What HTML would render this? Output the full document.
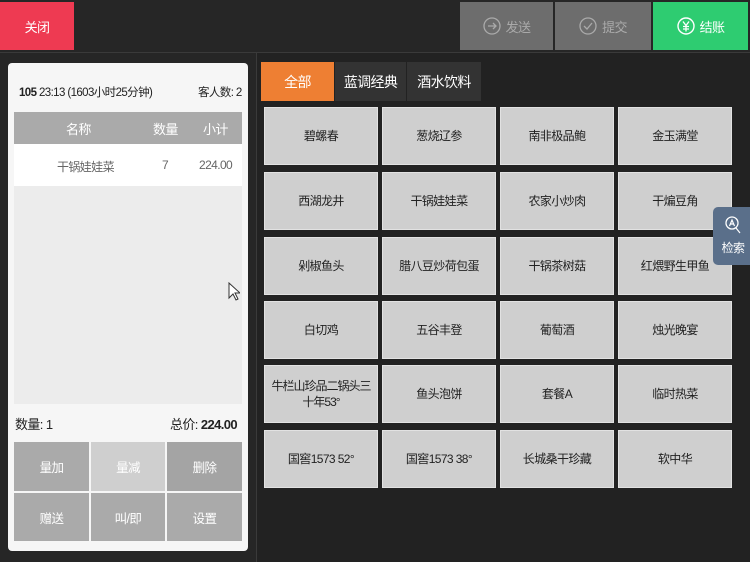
<!DOCTYPE html><html><head><meta charset="utf-8"><style>
*{margin:0;padding:0;box-sizing:border-box}
body{width:750px;height:562px;background:#262626;font-family:"Liberation Sans","Noto Sans CJK SC",sans-serif;position:relative;overflow:hidden;color:#222;letter-spacing:-0.6px}
.a{position:absolute}
.btn{display:flex;align-items:center;justify-content:center;color:#fff;font-size:13px}
.cell{position:absolute;width:114px;height:58px;background:#cfcfcf;border:1px solid #e2e2e2;display:flex;align-items:center;justify-content:center;text-align:center;font-size:12px;color:#222;line-height:16px;padding:0 2px}
.lb{position:absolute;display:flex;align-items:center;justify-content:center;color:#fff;font-size:12.5px}
</style></head><body>
<div class="a" style="left:0;top:52px;width:750px;height:1px;background:#3a3a3a"></div>
<div class="a" style="left:256px;top:53px;width:1px;height:509px;background:#3a3a3a"></div>
<div class="a" style="left:257px;top:53px;width:493px;height:509px;background:#222"></div>
<div class="a btn" style="left:0;top:2px;width:74px;height:48px;background:#ee3a52">关闭</div>
<div class="a btn" style="left:460px;top:2px;width:93px;height:48px;background:#6d6d6d;color:#aaa"><svg width="18" height="18" viewBox="0 0 18 18" style="margin-right:5px"><circle cx="9" cy="9" r="8" fill="none" stroke="#aaa" stroke-width="1.3"/><path d="M5 9h8M10 6l3 3-3 3" fill="none" stroke="#aaa" stroke-width="1.3"/></svg>发送</div>
<div class="a btn" style="left:555px;top:2px;width:96px;height:48px;background:#6d6d6d;color:#aaa"><svg width="18" height="18" viewBox="0 0 18 18" style="margin-right:5px"><circle cx="9" cy="9" r="8" fill="none" stroke="#aaa" stroke-width="1.3"/><path d="M5 9l3 3 5-6" fill="none" stroke="#aaa" stroke-width="1.3"/></svg>提交</div>
<div class="a btn" style="left:653px;top:2px;width:95px;height:48px;background:#2ecc71"><svg width="18" height="18" viewBox="0 0 18 18" style="margin-right:5px"><circle cx="9" cy="9" r="8" fill="none" stroke="#fff" stroke-width="1.4"/><path d="M6 4.5l3 4 3-4M9 8.5v6M6 9.5h6M6 12h6" fill="none" stroke="#fff" stroke-width="1.3"/></svg>结账</div>

<div class="a" style="left:8px;top:63px;width:240px;height:488px;background:#f6f6f6;border-radius:4px"></div>
<div class="a" style="left:19px;top:84px;font-size:11.5px;color:#222"><b>105</b> 23:13 (1603小时25分钟)</div>
<div class="a" style="left:198px;top:84px;font-size:11.5px">客人数: 2</div>
<div class="a" style="left:14px;top:112px;width:228px;height:32px;background:#aaaaaa;color:#fff;font-size:13px">
<span class="a" style="left:52px;top:7px">名称</span><span class="a" style="left:139px;top:7px">数量</span><span class="a" style="left:189px;top:7px">小计</span></div>
<div class="a" style="left:14px;top:144px;width:228px;height:42px;background:#fff;color:#666;font-size:12px">
<span class="a" style="left:43px;top:14px">干锅娃娃菜</span><span class="a" style="left:148px;top:14px">7</span><span class="a" style="left:185px;top:14px">224.00</span></div>
<div class="a" style="left:14px;top:186px;width:228px;height:218px;background:#ececec"></div>
<div class="a" style="left:15px;top:414px;font-size:13px">数量: 1</div>
<div class="a" style="right:513px;top:414px;font-size:13px">总价: <b>224.00</b></div>
<div class="lb" style="left:14px;top:442px;width:75px;height:49px;background:#aaa">量加</div>
<div class="lb" style="left:91px;top:442px;width:74px;height:49px;background:#cfcfcf">量减</div>
<div class="lb" style="left:167px;top:442px;width:75px;height:49px;background:#a4a4a4">删除</div>
<div class="lb" style="left:14px;top:493px;width:75px;height:48px;background:#aaa">赠送</div>
<div class="lb" style="left:91px;top:493px;width:74px;height:48px;background:#aaa">叫/即</div>
<div class="lb" style="left:167px;top:493px;width:75px;height:48px;background:#aaa">设置</div>

<div class="lb" style="left:261px;top:62px;width:73px;height:39px;background:#ee7f33;font-size:14px">全部</div>
<div class="lb" style="left:335px;top:62px;width:71px;height:39px;background:#333;font-size:14px">蓝调经典</div>
<div class="lb" style="left:407px;top:62px;width:74px;height:39px;background:#333;font-size:14px">酒水饮料</div>

<div class="cell" style="left:264px;top:107px">碧螺春</div>
<div class="cell" style="left:382px;top:107px">葱烧辽参</div>
<div class="cell" style="left:500px;top:107px">南非极品鲍</div>
<div class="cell" style="left:618px;top:107px">金玉满堂</div>
<div class="cell" style="left:264px;top:172px">西湖龙井</div>
<div class="cell" style="left:382px;top:172px">干锅娃娃菜</div>
<div class="cell" style="left:500px;top:172px">农家小炒肉</div>
<div class="cell" style="left:618px;top:172px">干煸豆角</div>
<div class="cell" style="left:264px;top:237px">剁椒鱼头</div>
<div class="cell" style="left:382px;top:237px">腊八豆炒荷包蛋</div>
<div class="cell" style="left:500px;top:237px">干锅茶树菇</div>
<div class="cell" style="left:618px;top:237px">红煨野生甲鱼</div>
<div class="cell" style="left:264px;top:301px">白切鸡</div>
<div class="cell" style="left:382px;top:301px">五谷丰登</div>
<div class="cell" style="left:500px;top:301px">葡萄酒</div>
<div class="cell" style="left:618px;top:301px">烛光晚宴</div>
<div class="cell" style="left:264px;top:365px;letter-spacing:-1px">牛栏山珍品二锅头三十年53°</div>
<div class="cell" style="left:382px;top:365px">鱼头泡饼</div>
<div class="cell" style="left:500px;top:365px">套餐A</div>
<div class="cell" style="left:618px;top:365px">临时热菜</div>
<div class="cell" style="left:264px;top:430px">国窖1573 52°</div>
<div class="cell" style="left:382px;top:430px">国窖1573 38°</div>
<div class="cell" style="left:500px;top:430px">长城桑干珍藏</div>
<div class="cell" style="left:618px;top:430px">软中华</div>

<div class="a" style="left:713px;top:207px;width:40px;height:58px;background:#5a6f8a;border-radius:5px 0 0 5px;color:#fff;font-size:12px;text-align:center">
<svg width="18" height="20" viewBox="0 0 18 20" style="margin-top:8px"><circle cx="8" cy="8" r="6" fill="none" stroke="#fff" stroke-width="1.3"/><path d="M12 13l4 5M5.5 11l2.5-6 2.5 6M6.5 9h3" fill="none" stroke="#fff" stroke-width="1.2"/></svg>
<div style="margin-top:1px">检索</div></div>
<svg class="a" style="left:228px;top:282px" width="12" height="19" viewBox="0 0 12 19"><path d="M1 1v15l4-4 3 6 2-1-3-6h5z" fill="#fff" stroke="#333" stroke-width="1"/></svg>
</body></html>
